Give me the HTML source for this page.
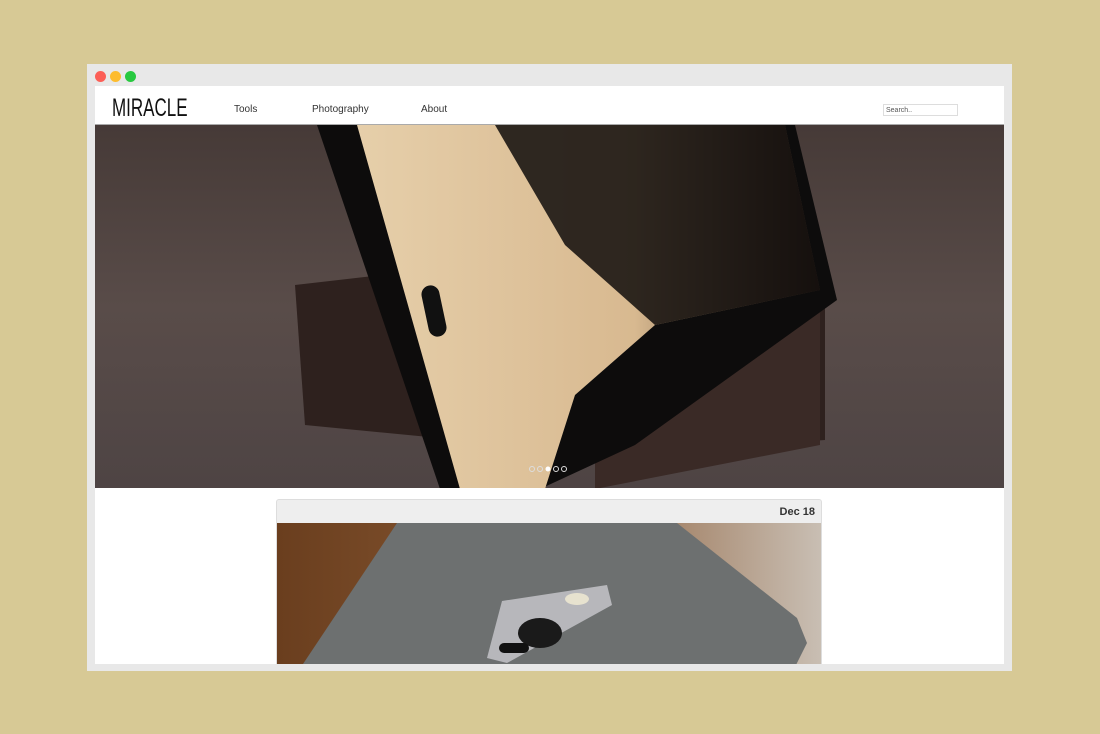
<!DOCTYPE html>
<html><head><style>
*{margin:0;padding:0;box-sizing:border-box}
body{width:1100px;height:734px;background:#d7c995;position:relative;overflow:hidden;font-family:"Liberation Sans",sans-serif}
.frame{position:absolute;left:87px;top:64px;width:925px;height:607px;background:#e8e8e8}
.dot{position:absolute;top:71px;width:11px;height:11px;border-radius:50%}
.page{position:absolute;left:95px;top:86px;width:909px;height:578px;background:#fff;overflow:hidden}
.logo{position:absolute;left:17px;top:8px;font-size:25px;color:#111;transform:scaleX(0.68);transform-origin:0 0;white-space:nowrap}
.nav{position:absolute;top:18px;font-size:10px;color:#333}
.search{position:absolute;left:788px;top:18px;width:75px;height:12px;border:1px solid #ddd;font-size:7px;color:#555;padding:2px 2px}
.hero{position:absolute;left:0;top:38px;width:909px;height:364px;overflow:hidden;border-top:1px solid #aaa}
.card{position:absolute;left:181px;top:413px;width:546px;height:200px;border:1px solid #ddd;border-radius:3px;background:#eee;overflow:hidden}
.date{position:absolute;right:6px;top:6px;font-size:11px;font-weight:bold;color:#333}
</style></head><body>
<div class="frame"></div>
<div class="dot" style="left:95px;background:#fc5f57"></div>
<div class="dot" style="left:110px;background:#fdbc2e"></div>
<div class="dot" style="left:125px;background:#28c940"></div>
<div class="page">
<div class="logo">MIRACLE</div>
<div class="nav" style="left:139px">Tools</div>
<div class="nav" style="left:217px">Photography</div>
<div class="nav" style="left:326px">About</div>
<div class="search">Search..</div>
<div class="hero">
<svg width="909" height="364" viewBox="0 0 909 364">
<defs>
<linearGradient id="bg" x1="0" y1="0" x2="0" y2="1"><stop offset="0" stop-color="#463a37"/><stop offset="0.5" stop-color="#594c49"/><stop offset="1" stop-color="#4e4444"/></linearGradient>
<linearGradient id="scr" x1="0" y1="0" x2="1" y2="0"><stop offset="0" stop-color="#e6cfaa"/><stop offset="0.6" stop-color="#d8b990"/><stop offset="1" stop-color="#3a2a22"/></linearGradient>
</defs>
<rect width="909" height="364" fill="url(#bg)"/>
<polygon points="200,160 330,145 730,165 730,315 520,330 210,300" fill="#2e211e"/>
<polygon points="500,190 725,165 725,320 500,364" fill="#3a2a26"/>
<polygon points="222,0 700,0 742,175 540,320 445,364 345,364" fill="#0d0c0c"/>
<polygon points="262,0 690,0 725,165 560,200 480,270 450,364 365,364" fill="url(#scr)"/>
<polygon points="400,0 690,0 725,165 560,200 470,120" fill="#0f0c0b" opacity=".85"/>
<rect x="330" y="160" width="18" height="52" rx="9" fill="#111" transform="rotate(-12 339 186)"/>
<circle cx="437" cy="344" r="2.5" fill="none" stroke="#ddd"/>
<circle cx="445" cy="344" r="2.5" fill="none" stroke="#ddd"/>
<circle cx="453" cy="344" r="2.5" fill="#fff"/>
<circle cx="461" cy="344" r="2.5" fill="none" stroke="#ddd"/>
<circle cx="469" cy="344" r="2.5" fill="none" stroke="#ddd"/>
</svg>
</div>
<div class="card">
<div class="date">Dec 18</div>
<div style="position:absolute;left:0;top:23px;width:546px;height:180px;overflow:hidden">
<svg width="546" height="180" viewBox="0 0 546 180">
<defs><linearGradient id="wd" x1="0" y1="0" x2="1" y2="0"><stop offset="0" stop-color="#6a3e1e"/><stop offset="0.5" stop-color="#8a5a34"/><stop offset="1" stop-color="#c9bfb4"/></linearGradient></defs>
<rect width="546" height="180" fill="url(#wd)"/>
<polygon points="120,0 400,0 520,95 530,120 500,180 30,180 20,150" fill="#6d7070"/>
<polygon points="225,78 330,62 335,82 230,140 210,135" fill="#b7b7bb"/>
<ellipse cx="263" cy="110" rx="22" ry="15" fill="#1a1a1a"/>
<ellipse cx="300" cy="76" rx="12" ry="6" fill="#e7e2cf"/>
<rect x="222" y="120" width="30" height="10" rx="5" fill="#111"/>
</svg>
</div>
</div>
</div>
</body></html>
